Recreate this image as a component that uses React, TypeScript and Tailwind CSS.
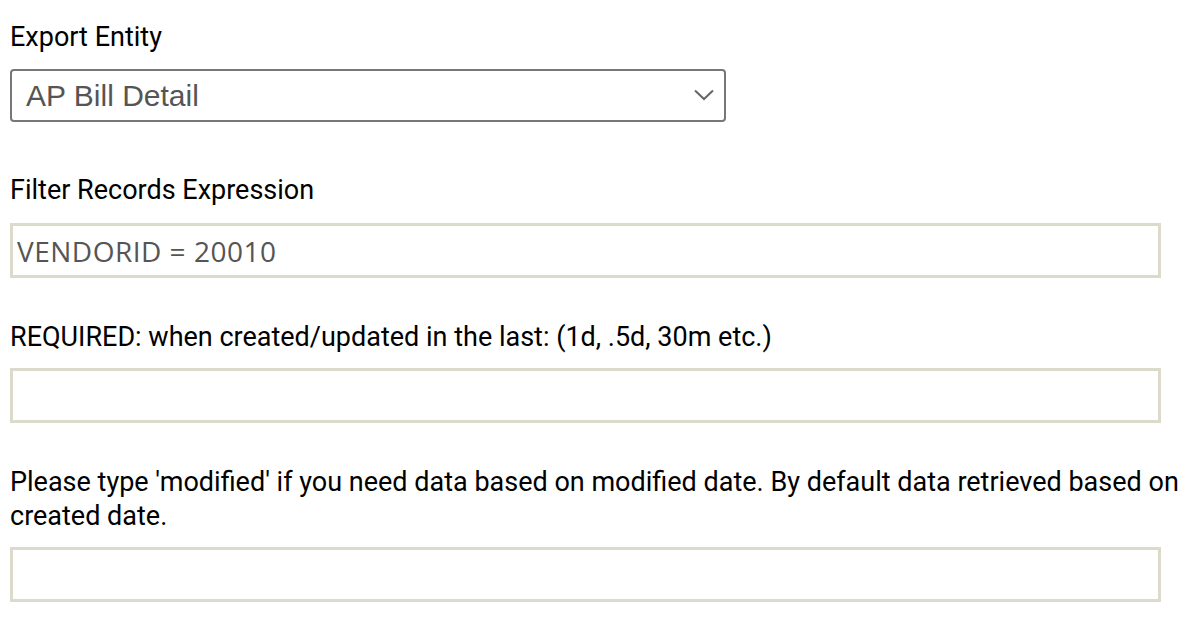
import { useState } from 'react';

function Chevron() {
  return (
    <svg width="20" height="12" viewBox="0 0 20 12" fill="none" className="absolute right-[12px] top-[20px] pointer-events-none">
      <path d="M1 1.5 L10 10 L19 1.5" stroke="#666" strokeWidth="2" />
    </svg>
  );
}

export default function App() {
  const [entity, setEntity] = useState('AP Bill Detail');
  const [filter, setFilter] = useState('VENDORID = 20010');
  const [since, setSince] = useState('');
  const [mode, setMode] = useState('');

  const inputCls =
    'block w-[1151px] h-[55px] border-[3px] border-[#dcdaca] bg-white px-[4px] text-[28px] text-[#555] tracking-[0.5px] outline-none';

  return (
    <div className="min-h-screen bg-white px-[10px] pt-[20px] font-['Roboto',sans-serif] text-[27px] leading-[34px] text-black">
      <label className="block">Export Entity</label>
      <div className="relative mt-[15px] w-[716px]">
        <select
          value={entity}
          onChange={(e) => setEntity(e.target.value)}
          className="block w-full h-[53px] appearance-none rounded-[4px] border-2 border-[#777] bg-white pl-[14px] font-['Liberation_Sans',Arial,sans-serif] text-[30px] text-[#555] outline-none"
        >
          <option>AP Bill Detail</option>
          <option>AP Bill</option>
          <option>Vendor</option>
        </select>
        <Chevron />
      </div>

      <label className="mt-[51px] block">Filter Records Expression</label>
      <input
        value={filter}
        onChange={(e) => setFilter(e.target.value)}
        className={`mt-[16px] ${inputCls} font-['Open_Sans',sans-serif]`}
      />

      <label className="mt-[42px] block">REQUIRED: when created/updated in the last: (1d, .5d, 30m etc.)</label>
      <input value={since} onChange={(e) => setSince(e.target.value)} className={`mt-[14px] ${inputCls}`} />

      <label className="mt-[42px] block">
        Please type 'modified' if you need data based on modified date. By default data retrieved based on created date.
      </label>
      <input value={mode} onChange={(e) => setMode(e.target.value)} className={`mt-[14px] ${inputCls}`} />
    </div>
  );
}
